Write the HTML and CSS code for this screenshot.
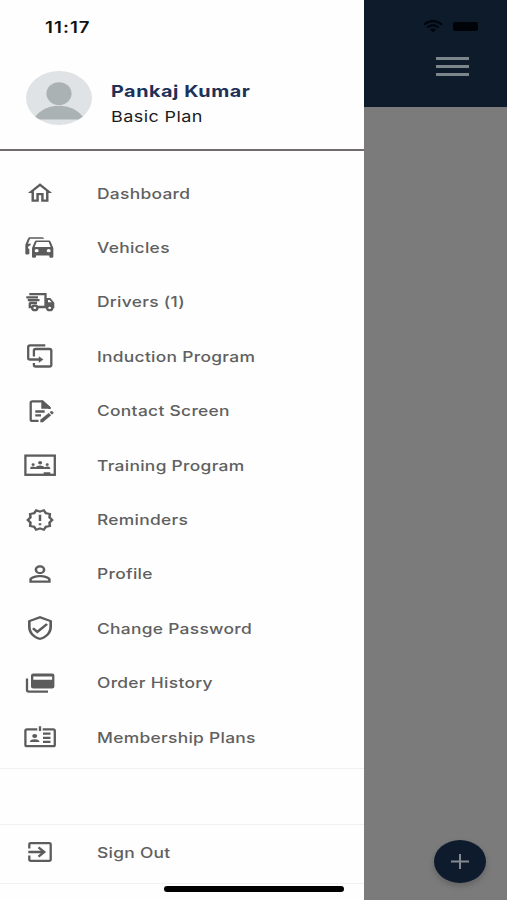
FILE: index.html
```
<!DOCTYPE html>
<html lang="en">
<head>
    <meta charset="UTF-8">
    <meta name="viewport" content="width=device-width, initial-scale=1.0">
    <title>Menu</title>
    <link rel="stylesheet" href="styles.css">
</head>
<body>
    <div class="screen">
        <aside class="drawer">
            <div class="time"><span class="wide">11:17</span></div>

            <div class="user">
                <svg class="avatar" viewBox="0 0 66 54">
                    <clipPath id="round"><ellipse cx="33" cy="27" rx="33" ry="27"/></clipPath>
                    <g clip-path="url(#round)">
                        <rect width="66" height="54" fill="#dfe3e5"/>
                        <ellipse cx="33" cy="22.6" rx="12.6" ry="11.4" fill="#abb2b4"/>
                        <path d="M7 48.500C14 38.500 23 34.800 33 34.800S52 38.500 59 48.500Z" fill="#abb2b4"/>
                    </g>
                </svg>
                <div class="user-text">
                    <div class="name"><span class="wide">Pankaj Kumar</span></div>
                    <div class="plan"><span class="wide">Basic Plan</span></div>
                </div>
            </div>

            <nav class="menu">
                <a class="item">
                    <svg class="icon" viewBox="-1.200 0 26.400 24" preserveAspectRatio="none"><path d="M12 5.690l5 4.500V18h-2v-6H9v6H7v-7.810l5-4.500M12 3L2 12h3v8h6v-6h2v6h6v-8h3L12 3z"/></svg>
                    <span class="wide">Dashboard</span>
                </a>
                <a class="item">
                    <svg class="icon" viewBox="0 0 24 24" preserveAspectRatio="none"><path d="M8 11L9.500 6.500H18.500L20 11M18.500 16A1.500 1.500 0 0 1 17 14.500A1.500 1.500 0 0 1 18.500 13A1.500 1.500 0 0 1 20 14.500A1.500 1.500 0 0 1 18.500 16M9.500 16A1.500 1.500 0 0 1 8 14.500A1.500 1.500 0 0 1 9.500 13A1.500 1.500 0 0 1 11 14.500A1.500 1.500 0 0 1 9.500 16M19.920 6C19.710 5.400 19.140 5 18.500 5H9.500C8.860 5 8.290 5.400 8.080 6L6 12V20A1 1 0 0 0 7 21H8A1 1 0 0 0 9 20V19H19V20A1 1 0 0 0 20 21H21A1 1 0 0 0 22 20V12L19.920 6M14.920 3C14.710 2.400 14.140 2 13.500 2H4.500C3.860 2 3.290 2.400 3.080 3L1 9V17A1 1 0 0 0 2 18H3A1 1 0 0 0 4 17V12.910C3.220 12.630 2.820 11.770 3.100 11C3.320 10.400 3.870 10 4.500 10H4.570L5.270 8H3L4.500 3.500H15.090L14.920 3Z"/></svg>
                    <span class="wide">Vehicles</span>
                </a>
                <a class="item">
                    <svg class="icon line" viewBox="0 0 32 26">
                        <path d="M5.300 5.200H21.500V18M2.300 8.300H14M3.800 11.200H15.500M5.300 14H13M5.800 14V18H8M13.500 18H22.500"/>
                        <path class="solid" d="M21.500 9H26.300L30.300 13.800V19.300H28.800A3.100 2.700 0 0 0 22.600 19.300H21.500ZM24 10.900V13.300H27.700L25.500 10.900Z" fill-rule="evenodd"/>
                        <ellipse cx="10.800" cy="18.900" rx="2.600" ry="2.200"/>
                        <ellipse cx="25.700" cy="18.900" rx="2.600" ry="2.200"/>
                    </svg>
                    <span class="wide">Drivers (1)</span>
                </a>
                <a class="item">
                    <svg class="icon line" viewBox="0 0 32 26">
                        <path d="M21.300 2.300H6Q4.200 2.300 4.200 3.900V14.900Q4.200 16.500 6 16.500H16M9.900 13.500V7.500Q9.900 6 11.700 6H25.500Q27.300 6 27.300 7.500V21.900Q27.300 23.500 25.500 23.500H11.700Q9.900 23.500 9.900 21.900V20"/>
                        <path class="solid" d="M14.800 13.200L19.400 16.500L14.800 19.800Z"/>
                    </svg>
                    <span class="wide">Induction Program</span>
                </a>
                <a class="item">
                    <svg class="icon line" viewBox="0 0 32 26">
                        <path d="M14.500 22.900H8.400Q6.700 22.900 6.700 21.400V4.900Q6.700 3.400 8.400 3.400H18.300L25.500 9.700V11M11.300 13.500H20.700M11.300 17.400H17"/>
                        <path class="solid" d="M17.300 2.500H19L26.500 9.200V10.700H17.300ZM16.300 21.800L24.700 15L27.200 17.200L18.900 24.200H16.300ZM25.600 14.300L27 13.200Q27.600 12.800 28.200 13.300L29.300 14.300Q29.900 14.900 29.300 15.400L28 16.500Z"/>
                    </svg>
                    <span class="wide">Contact Screen</span>
                </a>
                <a class="item">
                    <svg class="icon line" viewBox="0 0 32 26">
                        <rect x="1.400" y="3.600" width="29.400" height="19.200"/>
                        <path class="solid" d="M19.700 20.200H26.300V22.500H19.700ZM6.200 16.900V15.900Q6.500 14.600 9 14.600Q10.800 14.600 11.500 15.200Q12.500 13.400 16 13.400T20.700 15.200Q21.400 14.600 23.200 14.600Q26 14.600 26.200 15.900V16.900Z"/>
                        <ellipse class="solid" cx="16.100" cy="10.800" rx="2" ry="1.700"/>
                        <ellipse class="solid" cx="9.100" cy="12.600" rx="1.500" ry="1.300"/>
                        <ellipse class="solid" cx="23.200" cy="12.600" rx="1.500" ry="1.300"/>
                    </svg>
                    <span class="wide">Training Program</span>
                </a>
                <a class="item">
                    <svg class="icon" viewBox="-.7 -.3 25.400 24.600" preserveAspectRatio="none"><path d="M23 12l-2.440-2.780.340-3.680-3.610-.820-1.890-3.180L12 3 8.600 1.540 6.710 4.720l-3.610.810.340 3.680L1 12l2.440 2.780-.340 3.690 3.610.820 1.890 3.180L12 21l3.400 1.460 1.890-3.180 3.610-.820-.340-3.680L23 12zm-4.510 2.110l.260 2.790-2.740.620-1.430 2.410L12 18.820l-2.580 1.110-1.430-2.410-2.740-.620.260-2.800L3.660 12l1.850-2.120-.260-2.780 2.740-.610 1.430-2.410L12 5.180l2.580-1.110 1.430 2.410 2.740.620-.260 2.790L20.340 12l-1.850 2.110zM11 15h2v2h-2zM11 7h2v6h-2z"/></svg>
                    <span class="wide">Reminders</span>
                </a>
                <a class="item">
                    <svg class="icon" viewBox="0 0 24 24" preserveAspectRatio="none"><path d="M12 5.900a2.100 2.100 0 1 1 0 4.200 2.100 2.100 0 0 1 0-4.200m0 9c2.970 0 6.100 1.460 6.100 2.100v1.100H5.900V17c0-.640 3.130-2.100 6.100-2.100M12 4C9.790 4 8 5.790 8 8s1.790 4 4 4 4-1.790 4-4-1.790-4-4-4zm0 9c-2.670 0-8 1.340-8 4v3h16v-3c0-2.660-5.330-4-8-4z"/></svg>
                    <span class="wide">Profile</span>
                </a>
                <a class="item">
                    <svg class="icon" viewBox="0 0 24 24" preserveAspectRatio="none"><path d="M12 1L3 5v6c0 5.550 3.840 10.740 9 12 5.160-1.260 9-6.450 9-12V5l-9-4zm7 10c0 4.520-2.980 8.690-7 9.930-4.020-1.240-7-5.410-7-9.930V6.300l7-3.110 7 3.110V11zm-11.590.590L6 13l4 4 8-8-1.410-1.420L10 14.170z"/></svg>
                    <span class="wide">Change Password</span>
                </a>
                <a class="item">
                    <svg class="icon line" viewBox="0 0 32 26">
                        <path d="M3 8.400V20Q3 21.600 4.800 21.600H24"/>
                        <path class="solid" fill-rule="evenodd" d="M9.300 3.600H28.100Q30.400 3.600 30.400 5.600V16.500Q30.400 18.500 28.100 18.500H9.300Q7 18.500 7 16.500V5.600Q7 3.600 9.300 3.600ZM9.300 6.400V9.800H28.100V6.400Z"/>
                    </svg>
                    <span class="wide">Order History</span>
                </a>
                <a class="item">
                    <svg class="icon line" viewBox="0 0 32 26">
                        <path d="M13.300 5.300H3Q1.400 5.300 1.400 6.800V20.700Q1.400 22.200 3 22.200H29.200Q30.800 22.200 30.800 20.700V6.800Q30.800 5.300 29.200 5.300H18.700M16 2.300V7M19 9.700H26.500M19 13.800H26.500M19 17.900H26.500"/>
                        <ellipse class="solid" cx="10.700" cy="12" rx="2.500" ry="2.100"/>
                        <path class="solid" d="M6 18.100V17.300Q6.700 15.200 10.700 15.200T15.400 17.300V18.100Z"/>
                    </svg>
                    <span class="wide">Membership Plans</span>
                </a>
            </nav>

            <div class="sign-out">
                <a class="item">
                    <svg class="icon line" viewBox="0 0 32 26">
                        <path d="M5.300 9.500V5.500Q5.300 4.200 6.800 4.200H25.200Q26.700 4.200 26.700 5.500V20.500Q26.700 21.800 25.200 21.800H6.800Q5.300 21.800 5.300 20.500V16.500M4.300 13H20M14.500 8.300L20.300 13L14.500 17.700"/>
                    </svg>
                    <span class="wide">Sign Out</span>
                </a>
            </div>
        </aside>

        <main class="page">
            <header class="topbar">
                <div class="status">
                    <svg width="20" height="13" viewBox="0 0 20 13"><path d="M1 4.600Q10-2.600 19 4.600M4.200 7.500Q10 3 15.800 7.500" fill="none" stroke="#000610" stroke-width="2.200"/><path d="M6.700 9.600Q10 7.200 13.300 9.600L10 12.600Z" fill="#000610"/></svg>
                    <div class="battery"></div>
                </div>
                <div class="burger"><i></i><i></i><i></i></div>
            </header>
            <button class="add">
                <svg width="20" height="17" viewBox="0 0 20 17"><path d="M1 8.500H19M10 1V16" stroke="#84898f" stroke-width="2"/></svg>
            </button>
        </main>

        <div class="home-bar"></div>
    </div>
</body>
</html>
```
FILE: styles.css
```
body {
    font-family: 'Inter', 'Liberation Sans', sans-serif;
    margin: 0;
    background-color: #fff;
}

.screen {
    position: relative;
    display: flex;
    width: 507px;
    height: 900px;
    overflow: hidden;
}

.drawer {
    display: flex;
    flex-direction: column;
    width: 364px;
    background-color: #fefefe;
}

/* letters are wider than the font's own */
.wide {
    display: inline-block;
    white-space: nowrap;
    transform: scaleX(1.2);
    transform-origin: left center;
}

.time {
    height: 55px;
    padding-left: 45px;
    box-sizing: border-box;
    line-height: 55px;
    font-size: 15.5px;
    font-weight: 600;
    letter-spacing: 0.9px;
    color: #111;
}

.user {
    display: flex;
    height: 96px;
    box-sizing: border-box;
    padding: 16px 0 0 26px;
    border-bottom: 2px solid #706c6e;
}

.avatar {
    width: 66px;
    height: 54px;
}

.user-text {
    padding: 7px 0 0 19px;
}

.name {
    height: 26px;
    line-height: 26px;
    font-size: 16.5px;
    font-weight: 700;
    letter-spacing: 0.45px;
    color: #1d3159;
}

.plan {
    height: 26px;
    line-height: 26px;
    font-size: 15px;
    letter-spacing: 0.35px;
    color: #1c1c1c;
}

.menu {
    height: 618px;
    box-sizing: border-box;
    padding-top: 15px;
    border-bottom: 1px solid #f1f1f1;
}

.item {
    display: flex;
    align-items: center;
    height: 54.4px;
    padding-left: 24px;
    font-size: 14.5px;
    font-weight: 500;
    letter-spacing: 0.24px;
    color: #606060;
}

.icon {
    width: 32px;
    height: 26px;
    margin-right: 41px;
    fill: #5c5c5c;
}

.line {
    fill: none;
    stroke: #5c5c5c;
    stroke-width: 2.3;
}

.solid {
    fill: #5c5c5c;
    stroke: none;
}

.sign-out {
    height: 58px;
    margin-top: 55px;
    border-top: 1px solid #f1f1f1;
    border-bottom: 1px solid #f1f1f1;
}

.page {
    display: flex;
    flex-direction: column;
    justify-content: space-between;
    flex: 1;
    background-color: #7b7b7b;
}

.topbar {
    display: flex;
    flex-direction: column;
    align-items: flex-end;
    height: 107px;
    box-sizing: border-box;
    padding-top: 20px;
    background-color: #0e1b2a;
}

.status {
    display: flex;
    align-items: center;
    gap: 10px;
    padding-right: 29px;
}

.battery {
    width: 25px;
    height: 9px;
    border-radius: 2px;
    background-color: #000308;
}

.burger {
    display: flex;
    flex-direction: column;
    gap: 5px;
    padding: 24px 38px 0 0;
}

.burger i {
    width: 33px;
    height: 3px;
    background-color: #7d858c;
}

.add {
    display: flex;
    align-items: center;
    justify-content: center;
    align-self: flex-end;
    width: 52px;
    height: 43px;
    margin: 0 21px 17px 0;
    padding: 0;
    border: none;
    border-radius: 50%;
    background-color: #0e1b2d;
    box-shadow: 0 3px 6px rgba(0, 0, 0, 0.2);
}

.home-bar {
    position: absolute;
    left: 164px;
    bottom: 8px;
    width: 180px;
    height: 6px;
    border-radius: 3px;
    background-color: #000;
}
```
